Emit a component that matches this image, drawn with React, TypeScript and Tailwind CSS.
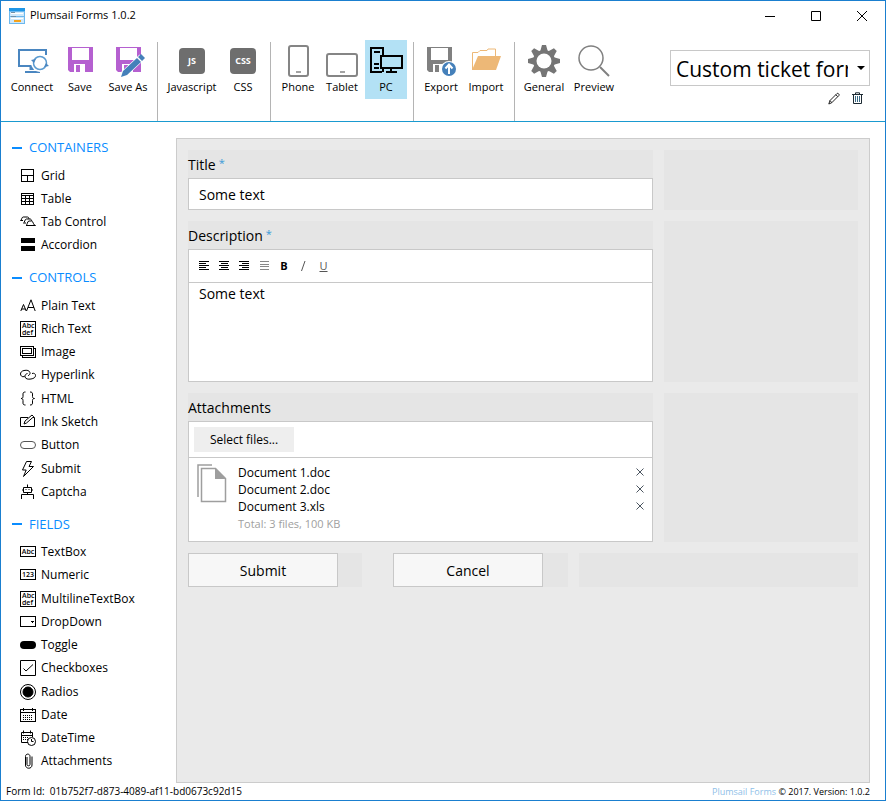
import type { ReactNode } from "react";

type Item = { label: string; icon: ReactNode };

function Glyph({ children, crisp = false }: { children: ReactNode; crisp?: boolean }) {
  return (
    <svg
      width="16"
      height="16"
      viewBox="0 0 16 16"
      fill="none"
      stroke="#000"
      strokeWidth="1"
      shapeRendering={crisp ? "crispEdges" : "auto"}
      className="shrink-0"
      aria-hidden="true"
    >
      {children}
    </svg>
  );
}

function AbcDef() {
  return (
    <Glyph>
      <rect x="0.5" y="0.5" width="15" height="15" />
      <g fill="#000" stroke="none" fontFamily="Open Sans, sans-serif" fontSize="7" fontWeight="600">
        <text x="2" y="7">Abc</text>
        <text x="2" y="14">def</text>
      </g>
    </Glyph>
  );
}

function BoxedText({ text }: { text: string }) {
  return (
    <Glyph>
      <rect x="0.5" y="2.5" width="15" height="10" />
      <text x="8" y="10" textAnchor="middle" fill="#000" stroke="none" fontFamily="Open Sans, sans-serif" fontSize="7" fontWeight="600">
        {text}
      </text>
    </Glyph>
  );
}

const containers: Item[] = [
  { label: "Grid", icon: <Glyph crisp><path d="M1.5 1.5h12v12h-12zM1.5 7.5h12M7.5 7.5v6" /></Glyph> },
  { label: "Table", icon: <Glyph crisp><path d="M1.5 2.5h12v11h-12zM1.5 4.5h12M1.5 7.5h12M1.5 10.5h12M5.5 4.5v9M9.5 4.5v9" /></Glyph> },
  {
    label: "Tab Control",
    icon: (
      <Glyph>
        <path d="M3 6.500H.5c1.200 0 1-3.500 2.700-3.500H7.500c1 0 1.200.700 1.500 2M6 9H3.500c1.200 0 1-4 3-4H10c1.200 0 1.500 1 1.800 2M6 11.500c1.500 0 1-4.500 3-4.500h2.500c2 0 1.500 4.500 4 4.500z" />
      </Glyph>
    ),
  },
  { label: "Accordion", icon: <Glyph crisp><path stroke="none" fill="#000" d="M1 1h14v5H1zM1 9h14v5H1z" /></Glyph> },
];

const controls: Item[] = [
  { label: "Plain Text", icon: <Glyph><path d="M.8 13 3.500 6.500 6.200 13M1.700 11h3.700M6.500 13 11 1.800 15.200 13M8 9.500h6" /></Glyph> },
  { label: "Rich Text", icon: <AbcDef /> },
  { label: "Image", icon: <Glyph crisp><path d="M.5 2.500h13v9H.5zM2.500 4.500h9v5h-9zM13.500 4.500h2v9h-13v-2" /></Glyph> },
  {
    label: "Hyperlink",
    icon: (
      <Glyph>
        <path d="M4.500 9.500C2 10.500.5 8.500.5 7S1.500 4 4 3.500c3-.7 5.500 0 6 2.200.3 1.500-.7 2.500-2 3M7.500 6.500c-2 .5-3 2-2.500 3.500.6 2 3 2.500 6 2 2.800-.5 4.500-1.500 4.500-3.500 0-1.700-1.500-2.700-3.500-2" />
      </Glyph>
    ),
  },
  { label: "HTML", icon: <Glyph><path d="M5.500 1c-2 0-2.500.7-2.500 2v2.500c0 1.200-.5 2-2 2 1.500 0 2 .8 2 2v2.500c0 1.300.5 2 2.500 2M10 1c2 0 2.500.7 2.500 2v2.500c0 1.200.5 2 2 2-1.500 0-2 .8-2 2v2.500c0 1.300-.5 2-2.500 2" /></Glyph> },
  { label: "Ink Sketch", icon: <Glyph><path d="M8 3.500H.5v9h14v-9H13M4 10l1-3 7-6 1.700 1.700L6.500 9z" /></Glyph> },
  { label: "Button", icon: <Glyph><rect x=".5" y="4.500" width="15" height="7" rx="3.500" stroke="#555" /></Glyph> },
  { label: "Submit", icon: <Glyph><path d="M6.500.5h5L9 5.500h4.500L3.500 15.500l2.700-6.500H2.500z" /></Glyph> },
  {
    label: "Captcha",
    icon: (
      <Glyph>
        <path d="M7.500.5v3M3.500 3.500h8v5h-8zM7.500 8.500v2M1.500 15v-4.500h12V15" />
        <path d="M5.500 5.500h1M8.500 5.500h1M2 6h1.500M11.500 6H13" />
      </Glyph>
    ),
  },
];

const fields: Item[] = [
  { label: "TextBox", icon: <BoxedText text="Abc" /> },
  { label: "Numeric", icon: <BoxedText text="123" /> },
  { label: "MultilineTextBox", icon: <AbcDef /> },
  {
    label: "DropDown",
    icon: (
      <Glyph crisp>
        <rect x=".5" y="2.500" width="15" height="10" />
        <path fill="#000" stroke="none" d="M10 7h4l-2 2z" />
      </Glyph>
    ),
  },
  { label: "Toggle", icon: <Glyph><rect x="0" y="4" width="16" height="8" rx="4" fill="#000" stroke="none" /></Glyph> },
  { label: "Checkboxes", icon: <Glyph><path d="M.5.5h15v15H.5zM3.500 8.500 6 11l7-6.500" /></Glyph> },
  {
    label: "Radios",
    icon: (
      <Glyph>
        <circle cx="8" cy="8" r="7.500" />
        <circle cx="8" cy="8" r="5" fill="#000" />
      </Glyph>
    ),
  },
  {
    label: "Date",
    icon: (
      <Glyph crisp>
        <path d="M.5 2.500h15v12H.5zM.5 5.500h15M3.500 1v3M12.500 1v3" />
        <path strokeDasharray="1 1" d="M3 8.500h10M3 10.500h10M3 12.500h10" />
      </Glyph>
    ),
  },
  {
    label: "DateTime",
    icon: (
      <Glyph>
        <path d="M8 12.500H1.500v-10h11V7M1.500 5.500h11M3.500.5v3M10.500.5v3" />
        <path strokeDasharray="1 1" d="M3 7.500h6M3 9.500h5" />
        <circle cx="11.500" cy="11.500" r="4" />
        <path d="M11.500 9v2.500h2" />
      </Glyph>
    ),
  },
  {
    label: "Attachments",
    icon: <Glyph><path d="M7 4v7.500c0 1.700 3 1.700 3 0V3.500C10 .3 5.500.3 5.500 3.500V12c0 4.300 6.500 4.300 6.500 0V3.500" /></Glyph>,
  },
];

function Section({ title, items, grow }: { title: string; items: Item[]; grow: string }) {
  return (
    <section className={`flex flex-col ${grow}`}>
      <h2>
        <button className="flex h-7 items-center gap-[7px] pb-1 pl-[11px] text-[13px] text-[#0a8cff]">
          <span className="h-[2px] w-[10px] bg-[#0a8cff]" />
          {title}
        </button>
      </h2>
      <ul className="flex flex-1 flex-col">
        {items.map((item) => (
          <li key={item.label} className="flex min-h-[23px] flex-1">
            <button className="flex items-center gap-[5px] pl-[19px] text-[12px] whitespace-nowrap">
              {item.icon}
              {item.label}
            </button>
          </li>
        ))}
      </ul>
    </section>
  );
}

function ToolButton({ label, width, active = false, children }: { label: string; width: string; active?: boolean; children: ReactNode }) {
  return (
    <button
      className={`flex h-[59px] shrink-0 flex-col items-center text-[11px] leading-4 whitespace-nowrap ${width} ${active ? "bg-[#b3e1f5]" : ""}`}
    >
      <svg width="40" height="39" viewBox="0 0 40 39" fill="none" className="shrink-0" aria-hidden="true">
        {children}
      </svg>
      {label}
    </button>
  );
}

function Group({ children }: { children: ReactNode }) {
  return <div className="flex items-start gap-[2px] px-[6px]">{children}</div>;
}

function Separator() {
  return <div className="mt-[2px] w-px bg-[#b4b4b4]" />;
}

function Floppy({ color }: { color: string }) {
  return (
    <>
      <path fill={color} d="M8 7h25v25H10l-2-2z" />
      <path fill="#fff" d="M12 8h17v12H12zM14 24h13v8H14z" />
      <path fill={color} d="M16 25h4v7h-4zM25 24h2v8h-2z" />
    </>
  );
}

function Toolbar() {
  return (
    <header className="flex border-b border-[#1a9ad0]">
      <div className="flex h-[91px] pt-[10px] pl-[2px]">
        <Group>
          <ToolButton label="Connect" width="w-[46px]">
            <g stroke="#4a86c0" strokeWidth="2">
              <path d="M20 26H7V10h27v5" />
              <path strokeWidth="5" d="M20 26v4" />
              <path d="M13 32h15" />
            </g>
            <circle cx="28" cy="23" r="9" fill="#fff" />
            <circle cx="28" cy="23" r="6.500" stroke="#5b9bd0" strokeWidth="1.500" />
            <path fill="#4a86c0" d="m19 20 5-1-2 4zM37 26l-5 1 2-4z" />
          </ToolButton>
          <ToolButton label="Save" width="w-[46px]">
            <Floppy color="#b560d0" />
          </ToolButton>
          <ToolButton label="Save As" width="w-[46px]">
            <Floppy color="#b560d0" />
            <path stroke="#fff" strokeWidth="7" d="M15 35 34 17" />
            <path fill="#4580ba" d="m13 37 2-6 14-13 4 4-14 13zM30 17l3-3 4 4-3 3z" />
          </ToolButton>
        </Group>
        <Separator />
        <Group>
          <ToolButton label="Javascript" width="w-[56px]">
            <rect x="7" y="8" width="26" height="26" rx="4" fill="#6e6e6e" />
            <text x="20" y="24" textAnchor="middle" fill="#fff" fontFamily="Open Sans, sans-serif" fontSize="9" fontWeight="700">JS</text>
          </ToolButton>
          <ToolButton label="CSS" width="w-[42px]">
            <rect x="7" y="8" width="26" height="26" rx="4" fill="#6e6e6e" />
            <text x="20" y="24" textAnchor="middle" fill="#fff" fontFamily="Open Sans, sans-serif" fontSize="9" fontWeight="700">CSS</text>
          </ToolButton>
        </Group>
        <Separator />
        <Group>
          <ToolButton label="Phone" width="w-[42px]">
            <rect x="11" y="6" width="19" height="30" rx="2" stroke="#858585" strokeWidth="2" />
            <path stroke="#858585" strokeWidth="1.500" d="M18 32h5" />
          </ToolButton>
          <ToolButton label="Tablet" width="w-[42px]">
            <rect x="5" y="14" width="30" height="22" rx="2" stroke="#858585" strokeWidth="2" />
            <path stroke="#858585" strokeWidth="1.500" d="M18 32h5" />
          </ToolButton>
          <ToolButton label="PC" width="w-[42px]" active>
            <g stroke="#000" strokeWidth="2">
              <path d="M16 32H5V8h12v24M8 12h6M8 24h5M8 28h5" />
              <path fill="#b3e1f5" d="M15 16h21v12H15z" />
              <path d="M25 28v4M20 32h11" />
            </g>
          </ToolButton>
        </Group>
        <Separator />
        <Group>
          <ToolButton label="Export" width="w-[42px]">
            <g transform="translate(-2 0)">
              <Floppy color="#808080" />
            </g>
            <circle cx="28" cy="29" r="8" fill="#fff" />
            <circle cx="28" cy="29" r="7" fill="#4580ba" />
            <path stroke="#fff" strokeWidth="2" d="M28 34v-8M24.500 28.500l3.500-4 3.500 4" />
          </ToolButton>
          <ToolButton label="Import" width="w-[44px]">
            <path stroke="#edb877" d="M6.500 30V12.500H12l2-2h7l1-1.500h7.500v8" />
            <path fill="#edb877" d="M6 30 12 16h23l-5 14z" />
          </ToolButton>
        </Group>
        <Separator />
        <Group>
          <ToolButton label="General" width="w-[46px]">
            <g fill="#757575">
              <circle cx="20" cy="21" r="11" />
              {[0, 45, 90, 135, 180, 225, 270, 315].map((angle) => (
                <path key={angle} d="m16 12 2-7h4l2 7z" transform={`rotate(${angle} 20 21)`} />
              ))}
            </g>
            <circle cx="20" cy="21" r="7.500" fill="#fff" />
          </ToolButton>
          <ToolButton label="Preview" width="w-[50px]">
            <circle cx="17" cy="18" r="12" stroke="#808080" strokeWidth="1.500" />
            <path stroke="#808080" strokeWidth="2" d="m26 27 9 9" />
          </ToolButton>
        </Group>
      </div>
      <div className="mr-[15px] ml-auto w-[200px] shrink-0 pt-5">
        <div className="relative">
          <select
            aria-label="Form"
            className="block h-9 w-full appearance-none rounded-none border border-[#c8c8c8] bg-white pt-[1px] pr-[21px] pl-[5px] text-[21px] leading-8"
          >
            <option>Custom ticket form</option>
          </select>
          <svg width="8" height="5" viewBox="0 0 8 5" className="pointer-events-none absolute top-[16px] right-[5px]" aria-hidden="true">
            <path d="M0 0h8L4 4z" />
          </svg>
        </div>
        <div className="flex justify-end gap-3 pt-[6px] pr-[7px]">
          <button aria-label="Rename form">
            <svg width="12" height="13" viewBox="0 0 12 13" fill="none" stroke="#222" aria-hidden="true">
              <path d="M.8 12 2 8.500 9 1.500c.8-.8 2.800 1 2 1.900L3.800 10.700zM2 8.500l1.800 2.200M7.800 2.700l2 2" />
            </svg>
          </button>
          <button aria-label="Delete form">
            <svg width="11" height="13" viewBox="0 0 11 13" fill="none" stroke="#1d2a33" aria-hidden="true">
              <path d="M0 2.500h11M1.500 2.500v9h8v-9M3.500 2V.8h4V2" />
              <path stroke="#3a6a85" d="M3.500 4v6M5.500 4v6M7.500 4v6" />
            </svg>
          </button>
        </div>
      </div>
    </header>
  );
}

function AlignIcon({ rows, color }: { rows: string; color: string }) {
  return (
    <svg width="11" height="10" viewBox="0 0 11 10" fill="none" stroke={color} shapeRendering="crispEdges" aria-hidden="true">
      <path d={rows} />
    </svg>
  );
}

function Required() {
  return <span className="ml-[3px] align-top text-[11px] leading-[18px] text-[#3a9ad8]">*</span>;
}

const files = ["Document 1.doc", "Document 2.doc", "Document 3.xls"];
const labelStyle = "block h-7 pt-1 text-[14px] leading-[22px]";
const rowStyle = "grid grid-cols-[465fr_194fr] gap-[11px]";

function FormCanvas() {
  return (
    <main className="mt-4 mr-[15px] flex min-w-0 flex-1 flex-col gap-[11px] border border-[#ccc] bg-[#eaeaea] p-[11px]">
      <div className={rowStyle}>
        <div className="bg-[#e5e5e5]">
          <label htmlFor="title" className={labelStyle}>
            Title<Required />
          </label>
          <input id="title" defaultValue="Some text" className="block h-8 w-full border border-[#c8c8c8] bg-white px-[10px] text-[14px] outline-none" />
        </div>
        <div className="bg-[#e5e5e5]" />
      </div>

      <div className={rowStyle}>
        <div className="bg-[#e5e5e5]">
          <label htmlFor="description" className={labelStyle}>
            Description<Required />
          </label>
          <div className="border border-[#c8c8c8] bg-white">
            <div className="flex h-8 items-center gap-[9px] pl-[10px]">
              <button aria-label="Align left"><AlignIcon color="#000" rows="M0 .5h10M0 2.500h7M0 4.500h10M0 6.500h7M0 8.500h10" /></button>
              <button aria-label="Align center"><AlignIcon color="#000" rows="M0 .5h10M2 2.500h7M0 4.500h10M2 6.500h7M0 8.500h10" /></button>
              <button aria-label="Align right"><AlignIcon color="#000" rows="M0 .5h10M3 2.500h7M0 4.500h10M3 6.500h7M0 8.500h10" /></button>
              <button aria-label="Justify"><AlignIcon color="#888" rows="M1 .5h9M1 3.500h9M1 5.500h9M1 8.500h9" /></button>
              <button className="w-[10px] text-[11px] font-bold">B</button>
              <button className="w-[11px] text-[#555]" aria-label="Italic">
                <svg width="11" height="10" viewBox="0 0 11 10" fill="none" stroke="currentColor" aria-hidden="true"><path d="M3.500 10 7 0" /></svg>
              </button>
              <button className="w-[11px] text-[11px] text-[#555] underline">U</button>
            </div>
            <textarea
              id="description"
              defaultValue="Some text"
              className="block h-[99px] w-full resize-none border-t border-[#c8c8c8] px-[10px] text-[14px] leading-[22px] outline-none"
            />
          </div>
        </div>
        <div className="bg-[#e5e5e5]" />
      </div>

      <div className={rowStyle}>
        <div className="bg-[#e5e5e5]">
          <h3 className={labelStyle}>Attachments</h3>
          <div className="border border-[#c8c8c8] bg-white">
            <div className="border-b border-[#c8c8c8] p-[5px]">
              <button className="block h-[25px] w-[100px] bg-[#eee] text-[12px]">Select files...</button>
            </div>
            <div className="flex h-[83px] pt-[6px] pr-[7px] pl-2">
              <svg width="30" height="39" viewBox="0 0 30 39" fill="none" stroke="#9e9e9e" strokeWidth="1.500" className="shrink-0" aria-hidden="true">
                <path d="M1 33V1h14" />
                <path d="M4.500 4.500h14l10 10v23h-24z" />
                <path fill="#9e9e9e" stroke="none" d="M18 4v11h11z" />
              </svg>
              <div className="ml-[11px] flex-1 leading-[17px]">
                <ul>
                  {files.map((file) => (
                    <li key={file} className="flex h-[17px] justify-between text-[12px]">
                      {file}
                      <button aria-label={`Remove ${file}`} className="pr-[1px] pb-[2px]">
                        <svg width="8" height="8" viewBox="0 0 8 8" stroke="#4b5560" aria-hidden="true">
                          <path d="m.5.5 7 7M7.500.5l-7 7" />
                        </svg>
                      </button>
                    </li>
                  ))}
                </ul>
                <p className="text-[11px] text-[#a0a0a0]">Total: 3 files, 100 KB</p>
              </div>
            </div>
          </div>
        </div>
        <div className="bg-[#e5e5e5]" />
      </div>

      <div className="grid h-[34px] grid-cols-[194fr_175fr_279fr] gap-[11px]">
        <div className="mr-5 bg-[#e5e5e5]">
          <button className="block h-full w-[150px] border border-[#c8c8c8] bg-[#f7f7f7] text-[14px]">Submit</button>
        </div>
        <div className="bg-[#e5e5e5]">
          <button className="block h-full w-[150px] border border-[#c8c8c8] bg-[#f7f7f7] text-[14px]">Cancel</button>
        </div>
        <div className="bg-[#e5e5e5]" />
      </div>
    </main>
  );
}

export default function App() {
  return (
    <div className="flex min-h-screen flex-col border border-[#1a7fcf] bg-white font-['Open_Sans','Noto_Sans',sans-serif] text-black">
      <div className="flex h-[29px] items-center pl-2">
        <svg width="16" height="16" viewBox="0 0 16 16" aria-hidden="true">
          <path fill="#6cb8ee" d="M0 0h16v16H0z" />
          <path fill="#1e96e6" d="M0 0h16v3H0z" />
          <path fill="#cfe8fa" d="M1 4h14v4H1zM1 9h14v6H1z" />
          <path stroke="#fff" d="M2 5.500h12M2 10.500h12" />
          <path stroke="#6d8fa8" d="M2 4.500h4M2 8.500h5" />
          <path fill="#f5a21b" d="M5 12h7v2H5z" />
        </svg>
        <h1 className="ml-[5px] text-[11px]">Plumsail Forms 1.0.2</h1>
        <div className="ml-auto flex h-full">
          <button aria-label="Minimize" className="flex w-[46px] items-center justify-center">
            <svg width="10" height="10" stroke="#000" aria-hidden="true"><path d="M0 5.500h10" /></svg>
          </button>
          <button aria-label="Maximize" className="flex w-[46px] items-center justify-center">
            <svg width="10" height="10" fill="none" stroke="#000" aria-hidden="true"><path d="M.5.5h9v9h-9z" /></svg>
          </button>
          <button aria-label="Close" className="flex w-[46px] items-center justify-center">
            <svg width="10" height="10" stroke="#000" aria-hidden="true"><path d="m0 0 10 10M10 0 0 10" /></svg>
          </button>
        </div>
      </div>

      <Toolbar />

      <div className="flex flex-1">
        <nav className="flex w-[175px] shrink-0 flex-col gap-[9px] pt-[14px] pb-[10px]">
          <Section title="CONTAINERS" items={containers} grow="grow-[4]" />
          <Section title="CONTROLS" items={controls} grow="grow-[9]" />
          <Section title="FIELDS" items={fields} grow="grow-[10]" />
        </nav>
        <FormCanvas />
      </div>

      <footer className="flex h-[17px] items-center justify-between pr-[15px] pl-[5px] text-[9px]">
        <p className="text-[10px] whitespace-pre">Form Id:  01b752f7-d873-4089-af11-bd0673c92d15</p>
        <p>
          <a href="#" className="text-[#8fc0e8]">Plumsail Forms</a> © 2017. Version: 1.0.2
        </p>
      </footer>
    </div>
  );
}
